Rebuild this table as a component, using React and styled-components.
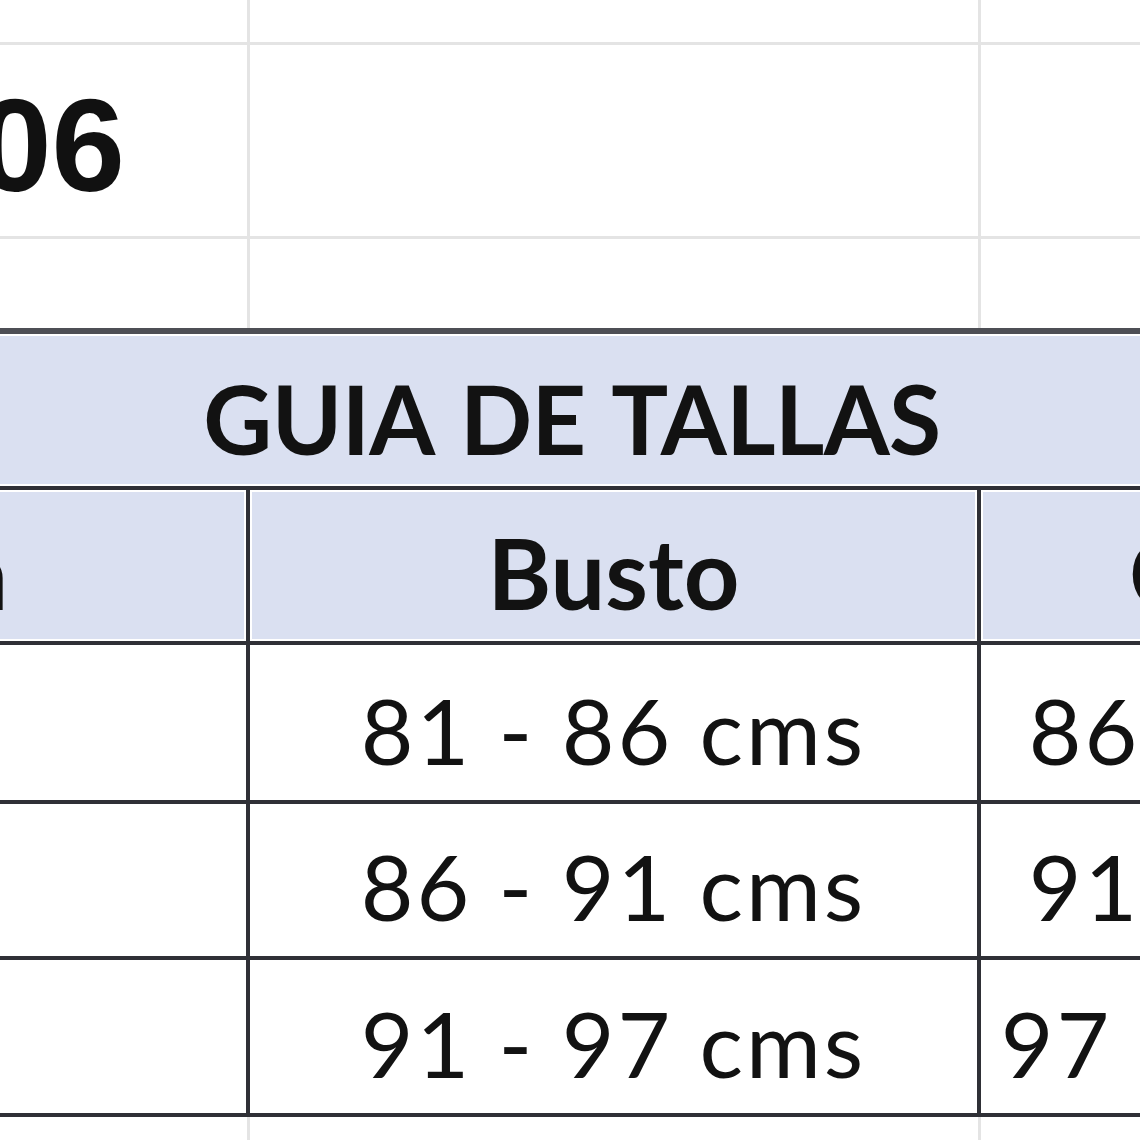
import React from "react";
import styled, { createGlobalStyle } from "styled-components";

const GlobalStyle = createGlobalStyle`
  html, body {
    margin: 0;
    padding: 0;
    background: #ffffff;
  }
`;

const sizes = [
  { talla: "S", busto: "81 - 86 cms", cadera: "86 - 91 cms", height: 159 },
  { talla: "M", busto: "86 - 91 cms", cadera: "91 - 97 cms", height: 156 },
  { talla: "L", busto: "91 - 97 cms", cadera: "97 - 102 cms", height: 157 },
];

const App = () => {
  return (
    <>
      <GlobalStyle />
      <Viewport>
        <Sheet>
          <GridRow $height={45}>
            <PlainCell />
            <PlainCell />
            <PlainCell />
          </GridRow>
          <GridRow $height={194}>
            <CodeCell>1006</CodeCell>
            <PlainCell />
            <PlainCell />
          </GridRow>
          <GridRow $height={89} $last>
            <PlainCell />
            <PlainCell />
            <PlainCell />
          </GridRow>

          <SizeTable>
            <TitleRow>
              <Title>GUIA DE TALLAS</Title>
            </TitleRow>
            <TableRow $height={155}>
              <HeadCell $shift={14}>Talla</HeadCell>
              <HeadCell>Busto</HeadCell>
              <HeadCell $last>Cadera</HeadCell>
            </TableRow>
            {sizes.map((s) => (
              <TableRow key={s.talla} $height={s.height}>
                <DataCell>{s.talla}</DataCell>
                <DataCell>{s.busto}</DataCell>
                <DataCell $last>{s.cadera}</DataCell>
              </TableRow>
            ))}
          </SizeTable>

          <GridRow $height={40} $last>
            <PlainCell />
            <PlainCell />
            <PlainCell />
          </GridRow>
        </Sheet>
      </Viewport>
    </>
  );
};

const Viewport = styled.div`
  width: 1140px;
  height: 1140px;
  overflow: hidden;
  background: #ffffff;
`;

const Sheet = styled.div`
  width: 2020px;
  margin-left: -438px;
  display: flex;
  flex-direction: column;
`;

const GridRow = styled.div`
  display: grid;
  grid-template-columns: 688px 731px 601px;
  height: ${(p) => p.$height}px;
  box-sizing: border-box;
  border-bottom: ${(p) => (p.$last ? "none" : "3px solid #e4e4e4")};
`;

const PlainCell = styled.div`
  border-right: 3px solid #e4e4e4;
  box-sizing: border-box;
`;

const CodeCell = styled(PlainCell)`
  display: flex;
  align-items: flex-end;
  justify-content: flex-end;
  padding: 0 122px 24px 0;
  font-family: "Liberation Sans", Arial, sans-serif;
  font-weight: 700;
  font-size: 132px;
  line-height: 1;
  color: #111111;
`;

const SizeTable = styled.div`
  display: flex;
  flex-direction: column;
  border-top: 6px solid #4e4f55;
  font-family: Lato, "Open Sans", sans-serif;
  color: #121212;
`;

const TitleRow = styled.div`
  height: 156px;
  box-sizing: border-box;
  border-bottom: 4px solid #2f3036;
  background: #dae0f1;
  box-shadow: inset 0 2px 0 #ffffff, inset 0 -2px 0 #ffffff;
  display: flex;
  align-items: flex-end;
  justify-content: center;
  padding-bottom: 20px;
`;

const Title = styled.div`
  font-size: 95px;
  font-weight: 700;
  line-height: 1;
  letter-spacing: -0.6px;
  word-spacing: 6px;
`;

const TableRow = styled.div`
  display: grid;
  grid-template-columns: 688px 731px 601px;
  height: ${(p) => p.$height}px;
  box-sizing: border-box;
  border-bottom: 4px solid #2f3036;
`;

const BaseCell = styled.div`
  box-sizing: border-box;
  border-right: ${(p) => (p.$last ? "none" : "4px solid #2f3036")};
  display: flex;
  align-items: flex-end;
  justify-content: center;
  line-height: 1;
  white-space: nowrap;
  padding-left: ${(p) => p.$shift || 0}px;
`;

const HeadCell = styled(BaseCell)`
  background: #dae0f1;
  box-shadow: inset 0 0 0 2px #ffffff;
  font-size: 97px;
  font-weight: 700;
  padding-bottom: 20px;
`;

const DataCell = styled(BaseCell)`
  background: #ffffff;
  font-size: 91px;
  font-weight: 400;
  letter-spacing: 3px;
  padding-bottom: 25px;
`;

export default App;
